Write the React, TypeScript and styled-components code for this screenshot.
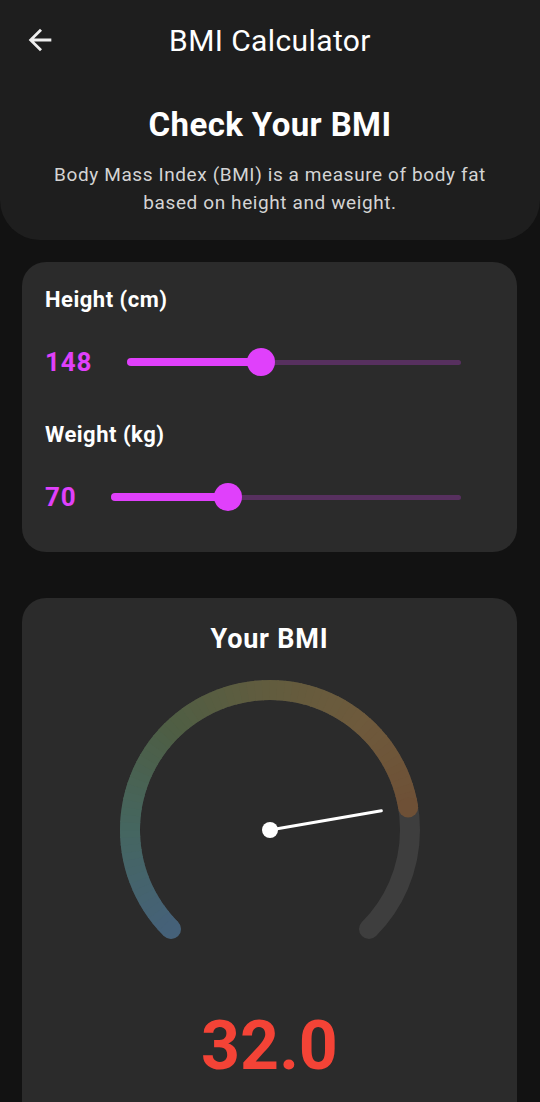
import React from "react";
import styled, { createGlobalStyle } from "styled-components";

const GlobalStyle = createGlobalStyle`
  html, body { margin: 0; padding: 0; background: #121212; }
  body { font-family: Roboto, "Noto Sans", "Liberation Sans", sans-serif; color: #fff; }
  * { box-sizing: border-box; }
`;

const Page = styled.div`
  width: 540px;
  min-height: 1102px;
  background: #121212;
  overflow: hidden;
`;

const Header = styled.header`
  background: #1e1e1e;
  border-radius: 0 0 40px 40px;
  padding-bottom: 23px;
`;

const TopBar = styled.div`
  height: 80px;
  display: grid;
  grid-template-columns: 64px 1fr 64px;
  align-items: center;
`;

const BackButton = styled.button`
  background: none;
  border: none;
  padding: 0 0 0 23px;
  display: flex;
  align-items: center;
  color: #eee;
  cursor: pointer;
`;

const Title = styled.h1`
  margin: 0;
  text-align: center;
  font-size: 30px;
  letter-spacing: 0.4px;
  font-weight: 400;
  color: #fff;
`;

const Heading = styled.h2`
  margin: 25px 0 0;
  text-align: center;
  font-size: 33px;
  letter-spacing: 0.4px;
  line-height: 40px;
  font-weight: 700;
`;

const Description = styled.p`
  margin: 16px 48px 0;
  text-align: center;
  font-size: 19px;
  letter-spacing: 0.6px;
  line-height: 28px;
  color: #d4d4d4;
`;

const Content = styled.main`
  padding: 22px 23px 0 22px;
  display: flex;
  flex-direction: column;
  gap: 46px;
`;

const Card = styled.section`
  background: #2b2b2b;
  border-radius: 24px;
`;

const InputCard = styled(Card)`
  padding: 26px 23px 39px;
`;

const Field = styled.div<{ $first?: boolean }>`
  margin-top: ${(p) => (p.$first ? 0 : 45)}px;
`;

const Label = styled.div`
  font-size: 22px;
  letter-spacing: 0.5px;
  line-height: 24px;
  font-weight: 700;
`;

const SliderRow = styled.div`
  margin-top: 34px;
  height: 32px;
  display: flex;
  align-items: center;
`;

const Value = styled.span`
  font-size: 26px;
  font-weight: 700;
  color: #e040fb;
  margin-right: 35px;
  letter-spacing: 0.8px;
`;

const SliderBox = styled.div`
  flex: 1;
  position: relative;
  height: 28px;
  margin-right: 33px;
  display: flex;
  align-items: center;
`;

const Rail = styled.div`
  position: absolute;
  left: 0;
  right: 0;
  height: 5px;
  border-radius: 3px;
  background: #57305f;
`;

const Fill = styled.div`
  position: absolute;
  left: 0;
  height: 8px;
  border-radius: 4px;
  background: #e040fb;
`;

const Thumb = styled.div`
  position: absolute;
  width: 28px;
  height: 28px;
  margin-left: -14px;
  border-radius: 50%;
  background: #e040fb;
`;

const ResultCard = styled(Card)`
  padding: 26px 0 60px;
  border-radius: 24px 24px 0 0;
  display: flex;
  flex-direction: column;
  align-items: center;
`;

const ResultTitle = styled.h3`
  margin: 0;
  font-size: 27px;
  letter-spacing: 0.8px;
  line-height: 30px;
  font-weight: 700;
`;

const GaugeSvg = styled.svg`
  display: block;
  margin-top: 16px;
`;

const BmiValue = styled.div`
  margin-top: 18px;
  font-size: 68px;
  line-height: 76px;
  font-weight: 700;
  color: #f44336;
`;

function Slider({ value, min, max }: { value: number; min: number; max: number }) {
  const pct = ((value - min) / (max - min)) * 100;
  return (
    <SliderBox>
      <Rail />
      <Fill style={{ width: `${pct}%` }} />
      <Thumb style={{ left: `${pct}%` }} />
    </SliderBox>
  );
}

type RGB = [number, number, number];
const stops: [number, RGB][] = [
  [-135, [69, 97, 121]],
  [-90, [69, 102, 96]],
  [-45, [78, 94, 68]],
  [0, [98, 92, 62]],
  [40, [110, 90, 60]],
  [81, [110, 80, 54]],
];

function colorAt(a: number): string {
  for (let i = 0; i < stops.length - 1; i++) {
    const [a0, c0] = stops[i];
    const [a1, c1] = stops[i + 1];
    if (a >= a0 && a <= a1) {
      const t = (a - a0) / (a1 - a0);
      const c = c0.map((v, k) => Math.round(v + (c1[k] - v) * t));
      return `rgb(${c[0]},${c[1]},${c[2]})`;
    }
  }
  const c = stops[stops.length - 1][1];
  return `rgb(${c[0]},${c[1]},${c[2]})`;
}

const CX = 160;
const CY = 160;
const R = 140;

function pt(a: number, r = R) {
  const rad = (a * Math.PI) / 180;
  return { x: CX + r * Math.sin(rad), y: CY - r * Math.cos(rad) };
}

function arc(a1: number, a2: number) {
  const p1 = pt(a1);
  const p2 = pt(a2);
  const large = a2 - a1 > 180 ? 1 : 0;
  return `M ${p1.x} ${p1.y} A ${R} ${R} 0 ${large} 1 ${p2.x} ${p2.y}`;
}

function Gauge({ value, min, max }: { value: number; min: number; max: number }) {
  const frac = (value - min) / (max - min);
  const end = -135 + 270 * frac;
  const segs: React.ReactElement[] = [];
  const n = 72;
  const step = (end + 135) / n;
  for (let i = 0; i < n; i++) {
    const a1 = -135 + i * step;
    const a2 = Math.min(end, a1 + step + 0.6);
    segs.push(
      <path key={i} d={arc(a1, a2)} stroke={colorAt(a1 + step / 2)} strokeWidth={20} fill="none" />
    );
  }
  const s = pt(-135);
  const e = pt(end);
  const needle = pt(end - 0.5, 113);
  return (
    <GaugeSvg width={320} height={320} viewBox="0 0 320 320">
      <path d={arc(-135, 135)} stroke="#3e3e3e" strokeWidth={20} fill="none" strokeLinecap="round" />
      <circle cx={s.x} cy={s.y} r={10} fill={colorAt(-135)} />
      {segs}
      <circle cx={e.x} cy={e.y} r={10} fill={colorAt(end)} />
      <line x1={CX} y1={CY} x2={needle.x} y2={needle.y} stroke="#fff" strokeWidth={3} strokeLinecap="round" />
      <circle cx={CX} cy={CY} r={8} fill="#fff" />
    </GaugeSvg>
  );
}

export default function App() {
  const height = 148;
  const weight = 70;
  const bmi = weight / Math.pow(height / 100, 2);
  return (
    <Page>
      <GlobalStyle />
      <Header>
        <TopBar>
          <BackButton aria-label="Back">
            <svg width="34" height="34" viewBox="0 0 24 24">
              <path d="M20 11H7.83l5.59-5.59L12 4l-8 8 8 8 1.41-1.41L7.83 13H20v-2z" fill="#eeeeee" />
            </svg>
          </BackButton>
          <Title>BMI Calculator</Title>
          <span />
        </TopBar>
        <Heading>Check Your BMI</Heading>
        <Description>
          Body Mass Index (BMI) is a measure of body fat based on height and weight.
        </Description>
      </Header>
      <Content>
        <InputCard>
          <Field $first>
            <Label>Height (cm)</Label>
            <SliderRow>
              <Value>{height}</Value>
              <Slider value={height} min={100} max={220} />
            </SliderRow>
          </Field>
          <Field>
            <Label>Weight (kg)</Label>
            <SliderRow>
              <Value>{weight}</Value>
              <Slider value={weight} min={30} max={150} />
            </SliderRow>
          </Field>
        </InputCard>
        <ResultCard>
          <ResultTitle>Your BMI</ResultTitle>
          <Gauge value={bmi} min={0} max={40} />
          <BmiValue>{bmi.toFixed(1)}</BmiValue>
        </ResultCard>
      </Content>
    </Page>
  );
}
